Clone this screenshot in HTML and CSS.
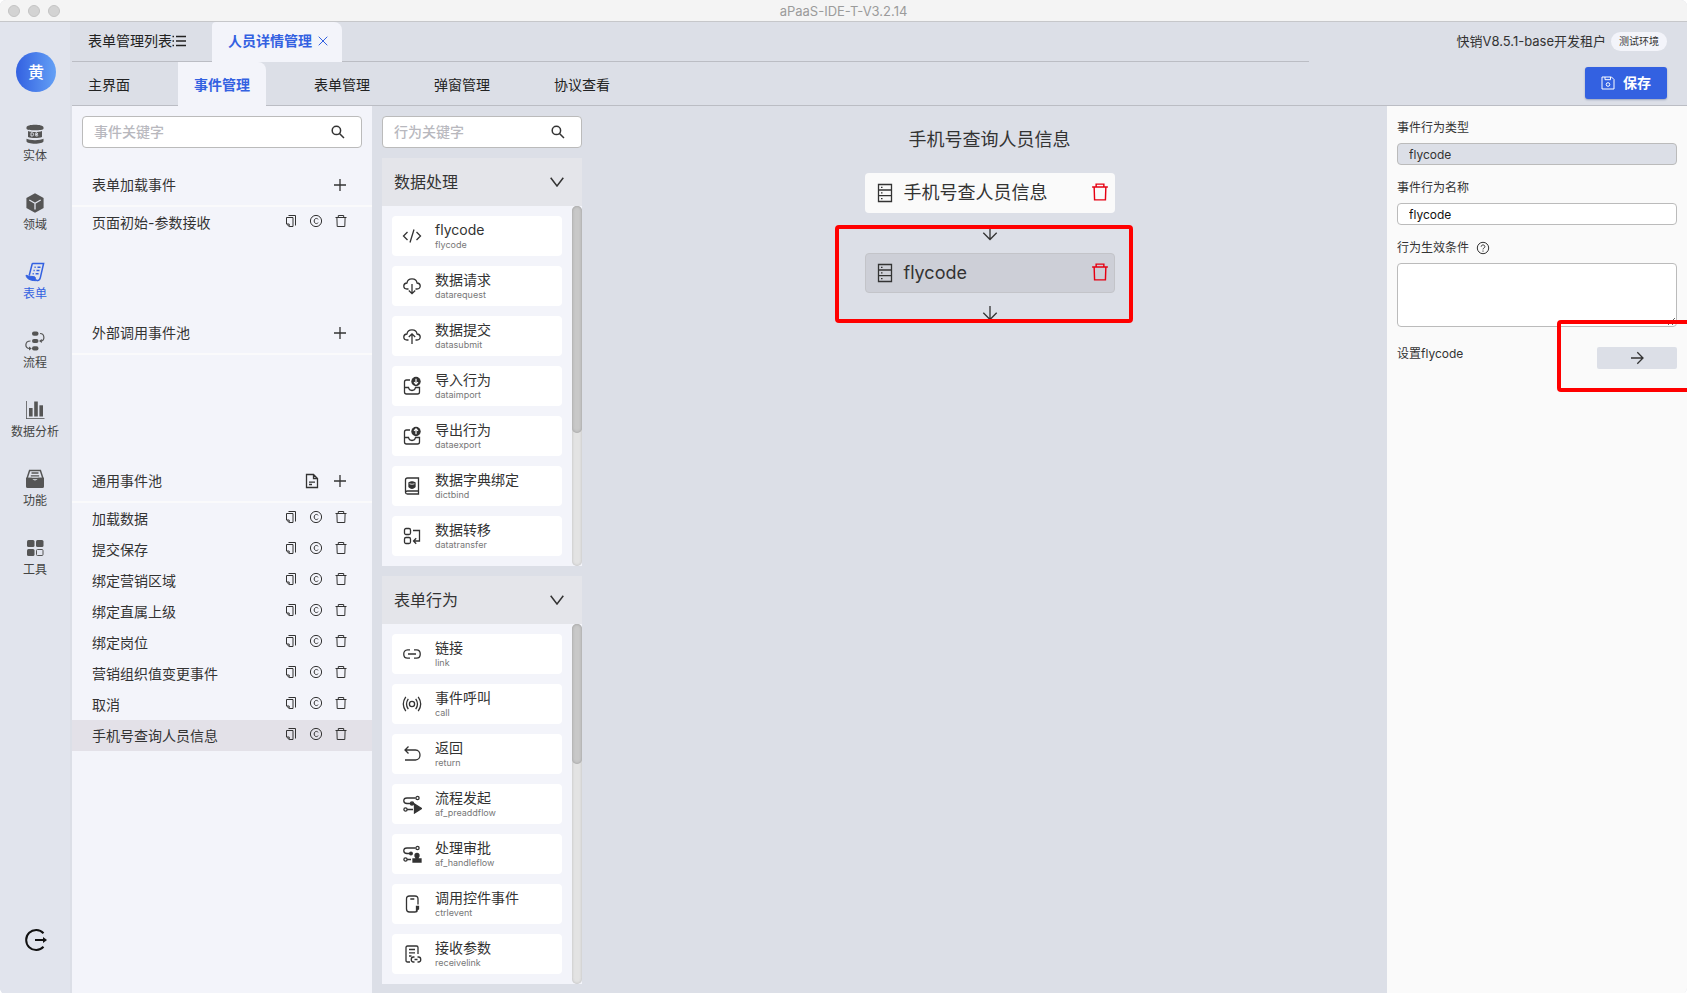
FILE: index.html
```html
<!DOCTYPE html>
<html lang="zh-CN">
<head>
<meta charset="utf-8">
<title>aPaaS-IDE-T-V3.2.14</title>
<link rel="stylesheet" href="styles.css">
</head>
<body>
<svg class="sprite" aria-hidden="true">
  <symbol id="i-search" viewBox="0 0 14 14"><circle cx="5.4" cy="5.4" r="4.2"/><path d="M8.5 8.5 13 13"/></symbol>
  <symbol id="i-plus" viewBox="0 0 12 12"><path d="M6 0v12M0 6h12"/></symbol>
  <symbol id="i-copy" viewBox="0 0 12 14"><path d="M3.500 1.500h7v10M1.500 3.500h6.500v9H4.200L1.500 10zM4.200 12.300V10H1.700"/></symbol>
  <symbol id="i-c" viewBox="0 0 14 14"><circle cx="7" cy="7" r="5.600"/><path d="M9.100 5.300C8.300 3.900 5.200 4 5.200 7s3.100 3.100 3.900 1.700"/></symbol>
  <symbol id="i-trash" viewBox="0 0 14 14"><path d="M1.500 3.500h11M4.300 3.300V1.500h5.400v1.800M2.900 3.500l.3 9h7.600l.3-9"/></symbol>
  <symbol id="i-doc" viewBox="0 0 14 16"><path d="M1.500 1.500h7l4 4v9h-11zM8.500 1.500v4h4M4 9.200h6M4 11.500h3"/></symbol>
  <symbol id="i-chev" viewBox="0 0 14 10"><path d="M.7.7 7 9 13.300.7"/></symbol>
  <symbol id="i-server" viewBox="0 0 16 20"><path d="M1.500 1.500h13v17h-13zM1.500 7h13M1.500 12.700h13M4 4.300h1.500M4 9.900h1.500M4 15.600h1.500"/></symbol>
  <symbol id="i-down" viewBox="0 0 16 16"><path d="M8 1v13.500M1.300 7.800 8 14.500l6.700-6.700"/></symbol>
</svg>

<div class="window">
  <div class="titlebar">
    <span class="dots"><i></i><i></i><i></i></span>
    <span>aPaaS-IDE-T-V3.2.14</span>
  </div>

  <div class="shell">
    <nav class="rail">
      <div class="avatar">黄</div>
      <a class="rail-item" href="#"><svg viewBox="0 0 20 20"><g fill="currentColor"><path d="M1.500 3.200C1.500-.2 18.500-.2 18.500 3.200v1.600c0 2-17 2-17 0zM3 7c3 1.400 11 1.400 14 0v6c-3 1.400-11 1.400-14 0zM1.500 14.800c3 1.900 14 1.900 17 0v2.400c0 3.300-17 3.300-17 0z"/></g><path d="M6 8.800h1.300q1.300 0 1.300 1.600T7.300 12H6zM10.800 8.800H12q1.400 1.600 0 1.600h-1.200 1.400q1.400 1.600 0 1.600h-1.400z" fill="none" stroke="#e1e4ed" stroke-width=".9"/></svg>实体</a>
      <a class="rail-item" href="#"><svg viewBox="0 0 20 20"><path fill="currentColor" d="M10 .3 18.600 5v10L10 19.700 1.400 15V5z"/><path d="M4.300 7 10 10.200 15.700 7M10 10.200v6.300" fill="none" stroke="#e1e4ed" stroke-width="1.300"/></svg>领域</a>
      <a class="rail-item active" href="#"><svg viewBox="0 0 20 20" fill="none"><path d="M7.300 1.500h11.300l-3.200 13.800c-.5 2.200-1.600 3.500-3.300 3.200M7.300 1.500 4.200 13.500M9.500 5.200h1.200m1.800 0h3M8.500 8.500h1.200m1.800 0h3M7.600 11.700h1.200m1.800 0h3" stroke="currentColor" stroke-width="1.500"/><path fill="currentColor" d="M1 13.200c3 1.600 6.800.8 9 1.800.3 1.800 1 3.200 2.400 3.600C7 19 1.500 17.500 1 13.200z" stroke="currentColor" stroke-width="1"/></svg>表单</a>
      <a class="rail-item" href="#"><svg viewBox="0 0 20 20"><g fill="currentColor"><rect x="7" y=".5" width="6.500" height="4.200" rx="2"/><rect x="7" y="7.900" width="6.500" height="4.200" rx="2"/><rect x="7" y="15.300" width="6.500" height="4.200" rx="2"/><path d="m16.800 8-2.800 2 2.800 2zM4 15.600l2.800 1.900L4 19.400z"/></g><path d="M15 2.500c5 0 5 7.500 1 7.500M5.500 10c-6 0-6 7.500-1 7.500" fill="none" stroke="currentColor" stroke-width="1.200"/></svg>流程</a>
      <a class="rail-item" href="#"><svg viewBox="0 0 20 20"><g fill="currentColor"><rect x="4" y="8" width="3.600" height="8.500"/><rect x="9.200" y="1.500" width="3.600" height="15"/><rect x="14.400" y="5.300" width="3.600" height="11.200"/></g><path d="M1.500 1v18M1 18.500h18.500" stroke="currentColor" stroke-width=".8" fill="none"/></svg>数据分析</a>
      <a class="rail-item" href="#"><svg viewBox="0 0 20 20"><path d="M4.600 1.500h10.800l2.600 8H2z" fill="none" stroke="currentColor" stroke-width="1.500"/><path d="M6.500 4h7M5.800 6.800h8.400" stroke="currentColor" stroke-width="1.300"/><path fill="currentColor" d="M1 8.800h6q.4 2.600 3 2.600t3-2.600h6v8.600q0 1.600-1.600 1.600H2.600Q1 19 1 17.400z"/></svg>功能</a>
      <a class="rail-item" href="#"><svg viewBox="0 0 20 20"><g fill="currentColor"><rect x="2" y="2" width="7.500" height="7" rx="1.500"/><rect x="11" y="2" width="7.500" height="7" rx="1.500"/><rect x="2" y="11" width="7.500" height="7" rx="1.500"/></g><rect x="11.500" y="11.500" width="6.500" height="6" rx="1" fill="none" stroke="currentColor" stroke-width="1"/></svg>工具</a>
      <button class="logout" aria-label="退出"><svg viewBox="0 0 24 24"><path d="M19.500 5.200a10 10 0 1 0 0 13.600M11 12h9"/><path d="m19 9 4 3-4 3z" fill="currentColor" stroke="none"/></svg></button>
    </nav>

    <div class="main">
      <header class="header">
        <div class="header-tabs">
          <div class="tabs tabs-top">
            <a class="tab" href="#">表单管理列表<svg class="ic14" viewBox="0 0 14 14"><path d="M4 2.500h10M4 7h10M4 11.500h10M.5 2.500h1.500M.5 7h1.500M.5 11.500h1.500"/></svg></a>
            <a class="tab active" href="#">人员详情管理<svg class="close" viewBox="0 0 10 10"><path d="m.7.7 8.600 8.600M9.300.7.700 9.300"/></svg></a>
          </div>
          <div class="tabs tabs-sub">
            <a class="tab" href="#">主界面</a>
            <a class="tab active" href="#">事件管理</a>
            <a class="tab" href="#">表单管理</a>
            <a class="tab" href="#">弹窗管理</a>
            <a class="tab" href="#">协议查看</a>
          </div>
        </div>
        <div class="header-side">
          <div class="tenant">快销V8.5.1-base开发租户<span class="pill">测试环境</span></div>
          <button class="save"><svg class="ic14" viewBox="0 0 14 14"><path d="M1 1h9.500L13 3.500V13H1zM4 1v2.700h5.500V1"/><circle cx="7" cy="8.500" r="1.800"/></svg>保存</button>
        </div>
      </header>

      <div class="content">
        <aside class="events">
          <div class="search"><input type="text" placeholder="事件关键字" aria-label="事件关键字"><svg class="ic14"><use href="#i-search"/></svg></div>
          <section class="pool">
            <h2 class="pool-head">表单加载事件<button class="icon-btn" aria-label="添加"><svg class="ic12"><use href="#i-plus"/></svg></button></h2>
            <div class="event">页面初始-参数接收<span class="acts"><svg><use href="#i-copy"/></svg><svg><use href="#i-c"/></svg><svg><use href="#i-trash"/></svg></span></div>
          </section>
          <section class="pool">
            <h2 class="pool-head">外部调用事件池<button class="icon-btn" aria-label="添加"><svg class="ic12"><use href="#i-plus"/></svg></button></h2>
          </section>
          <section class="pool">
            <h2 class="pool-head">通用事件池<button class="icon-btn doc-btn" aria-label="文档"><svg class="ic-doc"><use href="#i-doc"/></svg></button><button class="icon-btn" aria-label="添加"><svg class="ic12"><use href="#i-plus"/></svg></button></h2>
            <div class="event">加载数据<span class="acts"><svg><use href="#i-copy"/></svg><svg><use href="#i-c"/></svg><svg><use href="#i-trash"/></svg></span></div>
            <div class="event">提交保存<span class="acts"><svg><use href="#i-copy"/></svg><svg><use href="#i-c"/></svg><svg><use href="#i-trash"/></svg></span></div>
            <div class="event">绑定营销区域<span class="acts"><svg><use href="#i-copy"/></svg><svg><use href="#i-c"/></svg><svg><use href="#i-trash"/></svg></span></div>
            <div class="event">绑定直属上级<span class="acts"><svg><use href="#i-copy"/></svg><svg><use href="#i-c"/></svg><svg><use href="#i-trash"/></svg></span></div>
            <div class="event">绑定岗位<span class="acts"><svg><use href="#i-copy"/></svg><svg><use href="#i-c"/></svg><svg><use href="#i-trash"/></svg></span></div>
            <div class="event">营销组织值变更事件<span class="acts"><svg><use href="#i-copy"/></svg><svg><use href="#i-c"/></svg><svg><use href="#i-trash"/></svg></span></div>
            <div class="event">取消<span class="acts"><svg><use href="#i-copy"/></svg><svg><use href="#i-c"/></svg><svg><use href="#i-trash"/></svg></span></div>
            <div class="event selected">手机号查询人员信息<span class="acts"><svg><use href="#i-copy"/></svg><svg><use href="#i-c"/></svg><svg><use href="#i-trash"/></svg></span></div>
          </section>
        </aside>

        <div class="actions">
          <div class="search"><input type="text" placeholder="行为关键字" aria-label="行为关键字"><svg class="ic14"><use href="#i-search"/></svg></div>
          <section class="group">
            <h2 class="group-head">数据处理<svg class="ic-chev"><use href="#i-chev"/></svg></h2>
            <div class="group-body">
              <div class="items">
                <div class="item"><svg viewBox="0 0 20 20"><path d="M5.500 6 1.500 10l4 4M14.500 6l4 4-4 4M12 3.500l-4 13"/></svg><div class="item-text">flycode<small>flycode</small></div></div>
                <div class="item"><svg viewBox="0 0 20 20"><path d="M6.500 13H5C.7 13 .7 7.200 5 7c.5-5.500 9.500-5.500 10 0 4.300.2 4.300 6 0 6h-1.500M10 8v9.500M6.800 14.500l3.200 3.200 3.200-3.200"/></svg><div class="item-text">数据请求<small>datarequest</small></div></div>
                <div class="item"><svg viewBox="0 0 20 20"><path d="M6.500 14H5C.7 14 .7 8.200 5 8c.5-5.500 9.500-5.500 10 0 4.300.2 4.300 6 0 6h-1.500M10 18V8M6.800 11 10 7.800l3.200 3.200"/></svg><div class="item-text">数据提交<small>datasubmit</small></div></div>
                <div class="item"><svg viewBox="0 0 20 20"><path d="M8 4H4.500Q2.500 4 2.500 6v10q0 2 2 2h11q2 0 2-2v-4.500h-4q-.5 3-3.500 3t-3.500-3h-4"/><circle cx="14" cy="5.500" r="4.700" fill="currentColor" stroke="none"/><path d="M14 2.800V8M12 6.200l2 2 2-2" stroke="#fff" stroke-width="1.200"/></svg><div class="item-text">导入行为<small>dataimport</small></div></div>
                <div class="item"><svg viewBox="0 0 20 20"><path d="M8 4H4.500Q2.500 4 2.500 6v10q0 2 2 2h11q2 0 2-2v-4.500h-4q-.5 3-3.500 3t-3.500-3h-4"/><circle cx="14" cy="5.500" r="4.700" fill="currentColor" stroke="none"/><path d="M14 8.200V3M12 4.800l2-2 2 2" stroke="#fff" stroke-width="1.200"/></svg><div class="item-text">导出行为<small>dataexport</small></div></div>
                <div class="item"><svg viewBox="0 0 20 20"><path d="M3.500 16.500V4q0-2 2-2h11v16h-11q-2 0-2-1.500t2-1.500h11"/><path d="M7 6.800q3-2 6 0v4q-3 3-6 0z" fill="currentColor"/><path d="M7.500 7.800q2.500 1 5 0" stroke="#fff" stroke-width=".8"/></svg><div class="item-text">数据字典绑定<small>dictbind</small></div></div>
                <div class="item"><svg viewBox="0 0 20 20"><rect x="2.500" y="2.500" width="6" height="6" rx="1.500"/><rect x="2.500" y="11.500" width="6" height="6" rx="1.500"/><path d="M11 4.500h6.500V15H12M14.200 12.300 11.500 15l2.700 2.700"/></svg><div class="item-text">数据转移<small>datatransfer</small></div></div>
              </div>
              <div class="track"><div class="thumb thumb-long"></div></div>
            </div>
          </section>
          <section class="group">
            <h2 class="group-head">表单行为<svg class="ic-chev"><use href="#i-chev"/></svg></h2>
            <div class="group-body">
              <div class="items">
                <div class="item"><svg viewBox="0 0 20 20"><path d="M8 5.800H5.500c-5 0-5 8.400 0 8.400H8M12 5.800h2.500c5 0 5 8.400 0 8.400H12M6 10h8"/></svg><div class="item-text">链接<small>link</small></div></div>
                <div class="item"><svg viewBox="0 0 20 20"><circle cx="10" cy="10" r="2.600"/><path d="M6.300 4.800q-3.600 5.200 0 10.400M13.700 4.800q3.600 5.200 0 10.400M3.800 2.800q-5 7.200 0 14.400M16.200 2.800q5 7.200 0 14.400"/></svg><div class="item-text">事件呼叫<small>call</small></div></div>
                <div class="item"><svg viewBox="0 0 20 20"><path d="M6.500 2.500 3 6l3.500 3.500M3 6h10.500c6 0 6 10 0 10H3"/></svg><div class="item-text">返回<small>return</small></div></div>
                <div class="item"><svg viewBox="0 0 20 20"><path d="M13.500 4H5C.7 4 .7 9.500 5 9.500h4M5 15.500h6"/><circle cx="15.500" cy="4" r="1.600"/><circle cx="3.500" cy="15.500" r="1.600"/><circle cx="10" cy="9.500" r="1.600" fill="currentColor"/><path d="m12.500 10 7 4.500-7 4.500z" fill="currentColor"/></svg><div class="item-text">流程发起<small>af_preaddflow</small></div></div>
                <div class="item"><svg viewBox="0 0 20 20"><path d="M13.500 4H5C.7 4 .7 9.500 5 9.500h4M5 15.500h4"/><circle cx="15.500" cy="4" r="1.600"/><circle cx="3.500" cy="15.500" r="1.600"/><circle cx="9" cy="9.500" r="1.300" fill="currentColor"/><circle cx="15" cy="11.500" r="2" fill="currentColor"/><path d="M14 12h2v3h3v3h-8v-3h3z" fill="currentColor"/></svg><div class="item-text">处理审批<small>af_handleflow</small></div></div>
                <div class="item"><svg viewBox="0 0 20 20"><path d="M16 10.500V5q0-3-3-3H7.500Q4.500 2 4.500 5v10q0 3 3 3H13q2 0 2.500-1.500M8.300 5h4"/><path d="M14.500 12.500h2v2.500l-2 1.500z" fill="currentColor"/></svg><div class="item-text">调用控件事件<small>ctrlevent</small></div></div>
                <div class="item"><svg viewBox="0 0 20 20"><path d="M8 18H5.500q-1.500 0-1.500-1.500v-13Q4 2 5.500 2h9Q16 2 16 3.500V10M7 5.500h6M7 8.800h6M7 12h2.500"/><path d="M12.500 13H11.500c-3 0-3 5 0 5h1M15.500 13h1c3 0 3 5 0 5h-1M12.500 15.500h3"/></svg><div class="item-text">接收参数<small>receivelink</small></div></div>
              </div>
              <div class="track"><div class="thumb"></div></div>
            </div>
          </section>
        </div>

        <main class="canvas">
          <h1 class="canvas-title">手机号查询人员信息</h1>
          <div class="flow">
            <div class="node"><svg class="ic-server"><use href="#i-server"/></svg><span>手机号查人员信息</span><button class="icon-btn del" aria-label="删除"><svg><use href="#i-trash"/></svg></button></div>
            <div class="marked">
              <div class="arrow"><svg><use href="#i-down"/></svg></div>
              <div class="node current"><svg class="ic-server"><use href="#i-server"/></svg><span>flycode</span><button class="icon-btn del" aria-label="删除"><svg><use href="#i-trash"/></svg></button></div>
              <div class="arrow"><svg><use href="#i-down"/></svg></div>
              <div class="mark mark-node"></div>
            </div>
          </div>
        </main>

        <aside class="props">
          <div class="field"><label for="type">事件行为类型</label><input id="type" type="text" value="flycode" readonly></div>
          <div class="field"><label for="name">事件行为名称</label><input id="name" type="text" value="flycode"></div>
          <div class="field"><label for="cond">行为生效条件<svg class="help" viewBox="0 0 14 14"><circle cx="7" cy="7" r="5.700"/><path d="M5.200 5.700c0-2.400 3.700-2.300 3.700 0C8.900 7 7 7 7 8.400M7 9.500v1.200"/></svg></label><textarea id="cond"></textarea></div>
          <div class="setting"><span id="set">设置flycode</span><button class="go" aria-labelledby="set"><svg viewBox="0 0 14 14"><path d="M1 7h12M7.300 1.300 13 7l-5.700 5.700"/></svg></button><div class="mark mark-go"></div></div>
        </aside>
      </div>
    </div>
  </div>
</div>
</body>
</html>
```
FILE: styles.css
```css
* { box-sizing: border-box; }

body {
  margin: 0;
  background: #fff;
  color: #333;
  font: 14px/20px Inter, "Noto Sans CJK SC", sans-serif;
}

a { color: inherit; text-decoration: none; }
h1, h2 { margin: 0; font-weight: 400; }
button, input, textarea { font: inherit; color: inherit; }
svg { display: block; flex: none; fill: none; stroke: currentColor; stroke-width: 1.3px; }
.sprite { display: none; }
.ic12 { width: 12px; height: 12px; }
.ic14 { width: 14px; height: 14px; }

.window {
  display: flex;
  flex-direction: column;
  min-height: 100vh;
  border-radius: 6px;
  overflow: hidden;
  background: #dcdfe7;
}

.titlebar {
  display: flex;
  align-items: center;
  justify-content: center;
  position: relative;
  height: 22px;
  background: #f4f4f4;
  border-bottom: 1px solid #c6c7ca;
  color: #9b9b9b;
  font-size: 13px;
}
.dots { position: absolute; left: 8px; display: flex; gap: 8px; }
.dots i { width: 12px; height: 12px; border-radius: 50%; background: #d3d3d3; border: 1px solid #c3c3c3; }

.shell { display: flex; flex: 1; }

.rail {
  display: flex;
  flex-direction: column;
  align-items: center;
  width: 72px;
  padding: 30px 0 42px;
  background: #e1e4ed;
  border-right: 2px solid #dcdfe7;
  color: #444;
}
.avatar {
  width: 40px;
  height: 40px;
  margin: 0 0 32px 2px;
  border-radius: 50%;
  background: linear-gradient(90deg, #3361e1, #64a0f5);
  color: #fff;
  font-size: 16px;
  line-height: 40px;
  font-weight: 500;
  text-align: center;
}
.rail-item {
  display: flex;
  flex-direction: column;
  align-items: center;
  gap: 3px;
  height: 69px;
  font-size: 12px;
  line-height: 18px;
  white-space: nowrap;
}
.rail-item svg { width: 20px; height: 20px; stroke: none; color: #555; }
.rail-item.active, .rail-item.active svg { color: #3361e1; }
.logout { margin: auto 0 0 2px; padding: 0; border: 0; background: none; color: #111; }
.logout svg { width: 24px; height: 24px; stroke-width: 2px; }

.main { display: flex; flex-direction: column; flex: 1; min-width: 0; }

.header { display: flex; height: 84px; color: #222; }
.header-tabs { flex: 1; }
.tabs { display: flex; border-bottom: 1px solid #bbbdc4; }
.tabs-top { height: 40px; gap: 10px; }
.tabs-sub { height: 44px; gap: 32px; }
.tab { display: flex; align-items: center; padding: 2px 16px 0; white-space: nowrap; }
.tabs-top .tab:first-child { padding: 0 16px 2px; }
.tab.active {
  margin-bottom: -1px;
  background: #f3f4fa;
  border-radius: 0 8px 0 0;
  color: #3361e1;
  font-weight: 600;
}
.tabs-top .tab.active { padding: 0 14px 2px 16px; border-radius: 4px 8px 0 0; }
.close { width: 10px; height: 10px; margin-left: 6px; stroke-width: 1px; }
.header-side {
  display: flex;
  flex-direction: column;
  align-items: flex-end;
  gap: 16px;
  width: 378px;
  padding: 10px 20px 0 0;
  border-bottom: 1px solid #bbbdc4;
}
.tenant { display: flex; align-items: center; gap: 5px; font-size: 13px; line-height: 19px; color: #333; }
.pill { padding: 0 8px; border-radius: 10px; background: #f3f4fa; font-size: 10px; }
.save {
  display: flex;
  align-items: center;
  gap: 8px;
  height: 32px;
  padding: 0 16px;
  border: 0;
  border-radius: 3px;
  background: #3361e1;
  box-shadow: 0 1px 2px #9aa3bd;
  color: #fff;
  font-weight: 700;
}
.save svg { stroke-width: 1px; }

.content { display: flex; flex: 1; }

.search {
  display: flex;
  align-items: center;
  height: 32px;
  padding: 0 16px 0 11px;
  border: 1px solid #bbb;
  border-radius: 4px;
  background: #fff;
}
.search input { flex: 1; min-width: 0; padding: 0; border: 0; outline: 0; background: none; }
.search input::placeholder { color: #b8b8be; font-weight: 500; }
.search svg { stroke-width: 1.500px; }

.events { width: 300px; padding-top: 10px; background: #f3f4fa; }
.events .search { margin: 0 10px 15px; }
.pool { min-height: 148px; }
.pool-head {
  display: flex;
  align-items: center;
  height: 44px;
  padding: 2px 26px 0 20px;
  border-bottom: 2px solid #fafafb;
  font-size: 14px;
}
.icon-btn { margin-left: auto; padding: 0; border: 0; background: none; }
.doc-btn + .icon-btn { margin-left: 15px; }
.ic-doc { width: 14px; height: 16px; }
.event { display: flex; align-items: center; justify-content: space-between; height: 31px; padding: 0 24px 0 20px; }
.event.selected { background: #e3e1e8; }
.acts { display: flex; gap: 11px; padding-bottom: 3px; }
.acts svg { width: 14px; height: 14px; stroke-width: 1px; }

.actions { width: 200px; margin: 10px; }
.group { margin-top: 10px; }
.group-head {
  display: flex;
  align-items: center;
  justify-content: space-between;
  height: 48px;
  padding: 0 18px 0 12px;
  background: #e4e5ea;
  font-size: 16px;
}
.ic-chev { width: 14px; height: 10px; stroke-width: 1.500px; }
.group-body { display: flex; background: #f3f4fa; }
.items { display: flex; flex-direction: column; gap: 10px; flex: 1; padding: 10px; }
.item {
  display: flex;
  align-items: center;
  gap: 13px;
  height: 40px;
  padding: 0 0 1px 10px;
  border-radius: 4px;
  background: #fff;
}
.item svg { width: 20px; height: 20px; }
.item-text { line-height: 18px; }
.item small { display: block; color: #777; font-size: 9px; line-height: 12px; }
.track { width: 10px; border-radius: 5px; background: #e3e3e3; box-shadow: inset 0 0 3px #bbb; }
.thumb { height: 39%; border-radius: 5px; background: #c8c8c8; box-shadow: inset 0 0 3px #999; }
.thumb-long { height: 63%; }

.canvas { display: flex; flex: 1; flex-direction: column; align-items: center; padding-top: 21px; }
.canvas-title { margin-bottom: 20px; font-size: 18px; line-height: 26px; }
.flow { width: 250px; font-size: 18px; }
.node {
  display: flex;
  align-items: center;
  gap: 11px;
  height: 40px;
  padding: 0 5px 0 12px;
  border-radius: 4px;
  background: #fafafa;
}
.node.current { border: 1px solid #c3c4c9; background: #cdcfd7; padding: 0 4px 0 11px; }
.ic-server { width: 16px; height: 20px; }
.del { padding-bottom: 2px; color: #e60012; }
.del svg { width: 20px; height: 20px; stroke-width: 1px; }
.arrow { display: flex; align-items: center; justify-content: center; height: 40px; }
.arrow svg { width: 16px; height: 16px; }
.marked, .setting { position: relative; }
.mark { position: absolute; border: 4px solid #f00; border-radius: 4px; pointer-events: none; }
.mark-node { inset: 12px -18px 10px -30px; }
.mark-go { top: -21px; right: -14px; width: 134px; height: 72px; }

.props { width: 300px; padding: 13px 10px; background: #fafafa; font-size: 12px; line-height: 18px; }
.field { display: flex; flex-direction: column; gap: 6px; margin-bottom: 14px; }
.field label { display: flex; align-items: center; gap: 7px; }
.help { width: 14px; height: 14px; stroke-width: 1px; }
.field input, .field textarea {
  height: 22px;
  padding: 0 11px;
  border: 1px solid #bbb;
  border-radius: 4px;
  background: #fff;
  color: #111;
}
.field input[readonly] { background: #dcdfe7; color: #333; }
.field textarea { height: 64px; }
.setting { display: flex; align-items: flex-start; justify-content: space-between; padding-top: 4px; }
.go {
  display: flex;
  align-items: center;
  justify-content: center;
  width: 80px;
  height: 22px;
  margin-top: 2px;
  border: 0;
  border-radius: 2px;
  background: #dcdfe7;
}
.go svg { width: 14px; height: 14px; }
```
